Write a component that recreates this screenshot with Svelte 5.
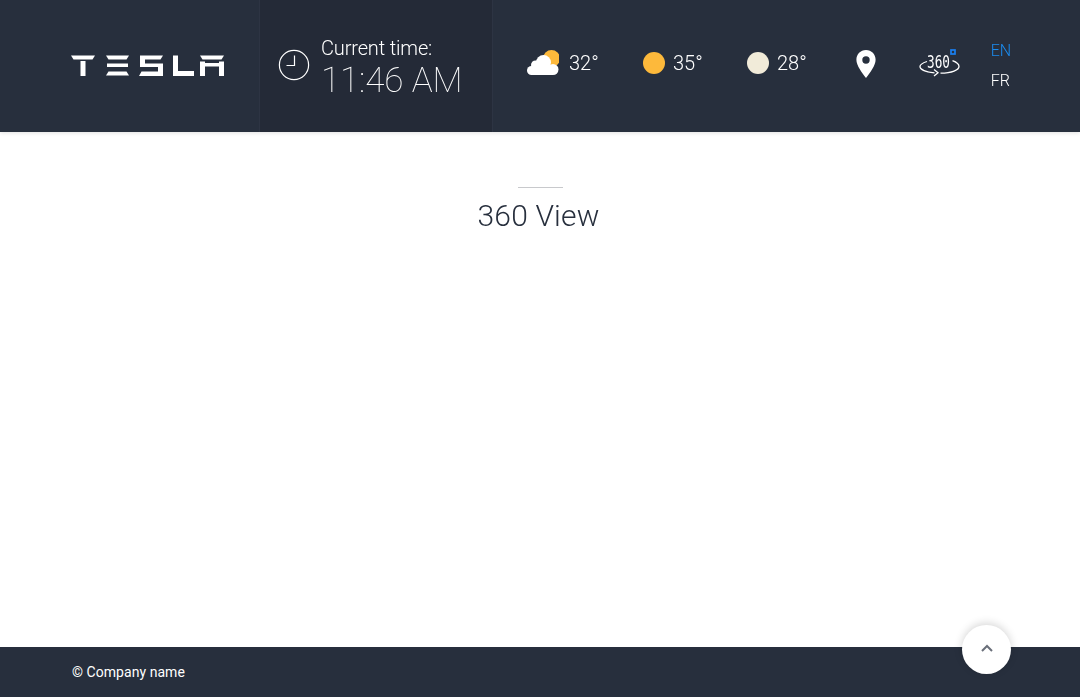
<script>
	let temps = [
		{ id: 'cloudy', value: '32°' },
		{ id: 'sun', value: '35°' },
		{ id: 'moon', value: '28°' }
	];
</script>

<div class="page">
	<header class="topbar">
		<div class="logo-cell">
			<svg class="logo" width="153" height="21" viewBox="0 0 153 21" aria-label="Tesla">
				<!-- T -->
				<path d="M0 0.5H24L21.500 4.500H2.500Z M9.500 6H14.500V21H9.500Z" />
				<!-- E -->
				<path d="M35 0.5H58L55.500 4.500H37.500Z M36 8.500H57V12H36Z M37.500 16.500H55.500L58 20.500H35Z" />
				<!-- S -->
				<path d="M69 0.5H92L89.500 4.500H69Z M69 4.500H74V12H69Z M71 8.500H92V21H68L70.500 16.500H87V12H71Z" />
				<!-- L -->
				<path d="M102 0.5H107V16H123V21H102Z" />
				<!-- A -->
				<path d="M129 0.5H153L150.500 4.500H131.500Z M129 6.500H134V21H129Z M148 6.500H153V21H148Z M134 8H148V11.500H134Z" />
			</svg>
		</div>

		<div class="time-cell">
			<svg class="clock" width="32" height="32" viewBox="0 0 32 32">
				<circle cx="16" cy="16" r="14.6" />
				<path d="M16.500 6.500V16.500H8.500" />
			</svg>
			<div class="time-text">
				<div class="time-label">Current time:</div>
				<div class="time-value">11:46 AM</div>
			</div>
		</div>

		<div class="weather">
			{#each temps as t}
				<div class="temp {t.id}">
					{#if t.id === 'cloudy'}
						<svg width="32" height="26" viewBox="0 0 32 26">
							<circle cx="24.500" cy="8.500" r="8.500" fill="#fdb93b" />
							<g fill="#fff">
								<circle cx="16.500" cy="12.500" r="7.500" />
								<circle cx="8.500" cy="15" r="4.500" />
								<circle cx="4.500" cy="20.500" r="4.500" />
								<circle cx="26" cy="19.500" r="5.500" />
								<rect x="4" y="17" width="22" height="8" />
							</g>
						</svg>
					{:else}
						<span class="dot"></span>
					{/if}
					<span class="deg">{t.value}</span>
				</div>
			{/each}
		</div>

		<svg class="pin" width="20" height="28" viewBox="0 0 20 28">
			<path fill-rule="evenodd" d="M10 0C4.500 0 .4 4.300.4 9.700c0 6 5.600 12.800 9.600 18.300 4-5.500 9.600-12.300 9.600-18.300C19.600 4.300 15.500 0 10 0Zm0 6.300a3.700 3.700 0 1 1 0 7.400 3.700 3.700 0 0 1 0-7.400Z" />
		</svg>

		<svg class="view360" width="41" height="28" viewBox="0 0 41 28">
			<rect class="blue" x="32" y="1" width="4" height="4" />
			<text x="8" y="18.500" textLength="23" lengthAdjust="spacingAndGlyphs">360</text>
			<path class="ring" d="M8 12.500C3.500 14 1 15.500 1 17.500c0 3 6 5.500 14.500 6.300 M21.500 24.200C33 24 40 21 40 17.500c0-2.500-2.500-4.300-6.500-5.800" />
			<path class="ring" d="M15 20.500l4 3.300-4 3.200" />
		</svg>

		<div class="langs">
			<span class="active">EN</span>
			<span>FR</span>
		</div>
	</header>

	<main class="content">
		<div class="rule"></div>
		<h1>360 View</h1>
	</main>

	<footer class="footer">
		<span>© Company name</span>
		<button class="to-top" aria-label="Back to top">
			<svg width="12" height="8" viewBox="0 0 12 8"><path d="M1 7l5-5 5 5" /></svg>
		</button>
	</footer>
</div>

<style>
	:global(body) {
		margin: 0;
		background: #fff;
		font-family: Roboto, "Liberation Sans", sans-serif;
	}

	.page {
		display: flex;
		flex-direction: column;
		height: 697px;
		overflow: hidden;
		will-change: opacity;
	}

	.topbar {
		display: flex;
		align-items: center;
		height: 132px;
		flex: none;
		background: #272f3d;
		box-shadow: 0 1px 4px rgba(0, 0, 0, 0.12);
		position: relative;
	}

	.logo-cell {
		width: 259px;
		box-sizing: border-box;
		padding-left: 71px;
		display: flex;
		margin-top: -2px;
	}

	.logo path {
		fill: #fff;
	}

	.time-cell {
		display: flex;
		align-items: center;
		box-sizing: border-box;
		width: 234px;
		height: 132px;
		padding-left: 18px;
		gap: 11px;
		background: #242a37;
		border-left: 1px solid #2d3443;
		border-right: 1px solid #2d3443;
	}

	.clock {
		fill: none;
		stroke: #fff;
		stroke-width: 1.2;
		margin-top: -2px;
	}

	.time-text {
		color: #fff;
		font-weight: 300;
		padding-top: 5px;
	}

	.time-label {
		font-size: 20px;
		line-height: 24px;
		letter-spacing: -0.15px;
	}

	.time-value {
		font-size: 35px;
		line-height: 41px;
		color: #fff;
		font-weight: 100;
		letter-spacing: -0.1px;
	}

	.weather {
		display: flex;
		align-items: center;
		margin-left: 34px;
		margin-top: -6px;
	}

	.temp {
		display: flex;
		align-items: center;
		color: #fff;
		font-size: 20px;
		font-weight: 300;
	}

	.temp.cloudy {
		width: 116px;
		gap: 10px;
	}

	.temp.sun {
		width: 104px;
		gap: 8px;
	}

	.temp.moon {
		gap: 8px;
	}

	.dot {
		width: 22px;
		height: 22px;
		border-radius: 50%;
	}

	.sun .dot {
		background: #fdb93b;
	}

	.moon .dot {
		background: #f1ebd9;
	}

	.pin {
		fill: #fff;
		margin-left: 49px;
		margin-top: -4px;
	}

	.view360 {
		margin-left: 43px;
		margin-top: -6px;
	}

	.view360 text {
		font-family: "DejaVu Sans Mono", monospace;
		font-size: 18px;
		fill: #fff;
	}

	.view360 .ring {
		fill: none;
		stroke: #fff;
		stroke-width: 1.3;
	}

	.view360 .blue {
		fill: none;
		stroke: #1a7ff0;
		stroke-width: 1.7;
	}

	.langs {
		display: flex;
		flex-direction: column;
		gap: 12px;
		margin-left: 31px;
		font-size: 16px;
		line-height: 18px;
		font-weight: 300;
		color: #fff;
	}

	.langs .active {
		color: #1a8cf0;
	}

	.content {
		flex: 1;
		display: flex;
		flex-direction: column;
		align-items: center;
		padding-top: 55px;
	}

	.rule {
		width: 45px;
		height: 1px;
		background: #c8c9cc;
	}

	h1 {
		margin: 11px 3px 0 0;
		font-size: 30px;
		line-height: 34px;
		font-weight: 300;
		color: #272f3d;
		letter-spacing: 0.15px;
	}

	.footer {
		height: 50px;
		flex: none;
		display: flex;
		align-items: center;
		box-sizing: border-box;
		padding-left: 72px;
		background: #272f3d;
		color: #fff;
		font-size: 14px;
		letter-spacing: 0.05px;
		position: relative;
	}

	.to-top {
		position: absolute;
		left: 962px;
		top: -22px;
		width: 49px;
		height: 49px;
		border: none;
		border-radius: 50%;
		background: #fff;
		box-shadow: 0 -2px 8px rgba(0, 0, 0, 0.16);
		display: flex;
		align-items: center;
		justify-content: center;
		padding: 0 0 4px;
	}

	.to-top svg {
		fill: none;
		stroke: #6a6f7a;
		stroke-width: 2;
	}
</style>
